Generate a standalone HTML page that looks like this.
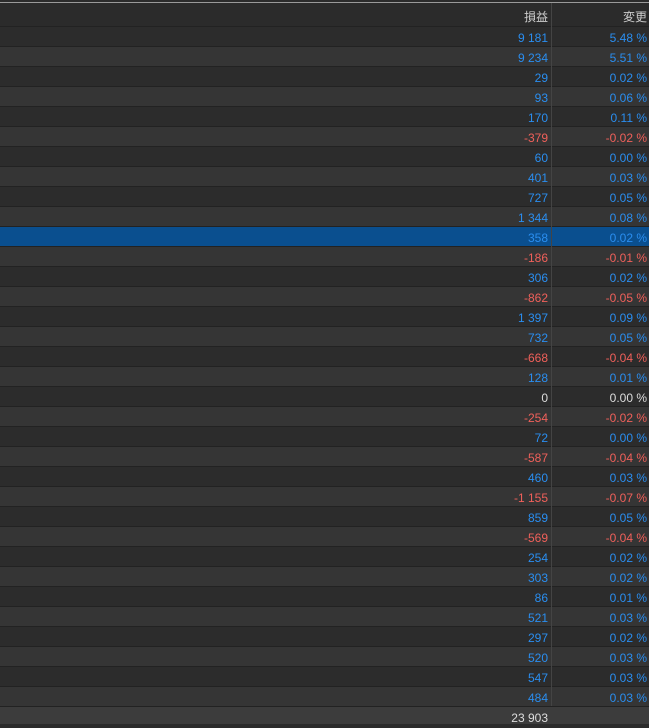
<!DOCTYPE html><html><head><meta charset="utf-8"><style>
body{margin:0;width:649px;height:724px;background:#2b2b2b;overflow:hidden;font-family:"Liberation Sans","Noto Sans CJK JP",sans-serif;font-size:12px}
.top{position:absolute;left:0;top:0;width:649px;height:2px;background:#2b2b2b;border-bottom:1px solid #9a9a9a}
.r{position:absolute;left:0;width:649px;height:19px;border-bottom:1px solid #222}
.r div{position:absolute;top:2px;line-height:19px;text-align:right}
.a{left:0;width:548px}.b{left:552px;width:95px}
.d{position:absolute;left:551px;top:3px;width:1px;height:703px;background:#444}
.bl{color:#2a8ef0}.rd{color:#f0605a}.w{color:#ddd}
</style></head><body><div class="top"></div>
<div class="r" style="top:3px;height:23px;background:#2b2b2b"><div class="a" style="line-height:24px;color:#ccc">損益</div><div class="b" style="line-height:24px;color:#ccc">変更</div></div>
<div id="rows"></div>
<div class="r" style="top:707px;height:17px;background:#3c3c3c;border:0"><div class="a" style="top:1px;line-height:20px;color:#ddd">23 903</div></div>
<div class="d"></div>
<script>
var d=[["9 181","5.48 %"],["9 234","5.51 %"],["29","0.02 %"],["93","0.06 %"],["170","0.11 %"],["-379","-0.02 %"],["60","0.00 %"],["401","0.03 %"],["727","0.05 %"],["1 344","0.08 %"],["358","0.02 %"],["-186","-0.01 %"],["306","0.02 %"],["-862","-0.05 %"],["1 397","0.09 %"],["732","0.05 %"],["-668","-0.04 %"],["128","0.01 %"],["0","0.00 %"],["-254","-0.02 %"],["72","0.00 %"],["-587","-0.04 %"],["460","0.03 %"],["-1 155","-0.07 %"],["859","0.05 %"],["-569","-0.04 %"],["254","0.02 %"],["303","0.02 %"],["86","0.01 %"],["521","0.03 %"],["297","0.02 %"],["520","0.03 %"],["547","0.03 %"],["484","0.03 %"]];
var h="";d.forEach(function(x,i){var bg=i==10?"#0a4f8f":(i%2?"#353535":"#2c2c2c");var c=x[0]=="0"?"w":(x[0][0]=="-"?"rd":"bl");
h+='<div class="r" style="top:'+(27+20*i)+'px;background:'+bg+'"><div class="a '+c+'">'+x[0]+'</div><div class="b '+c+'">'+x[1]+'</div></div>';});
document.getElementById("rows").innerHTML=h;
</script></body></html>
